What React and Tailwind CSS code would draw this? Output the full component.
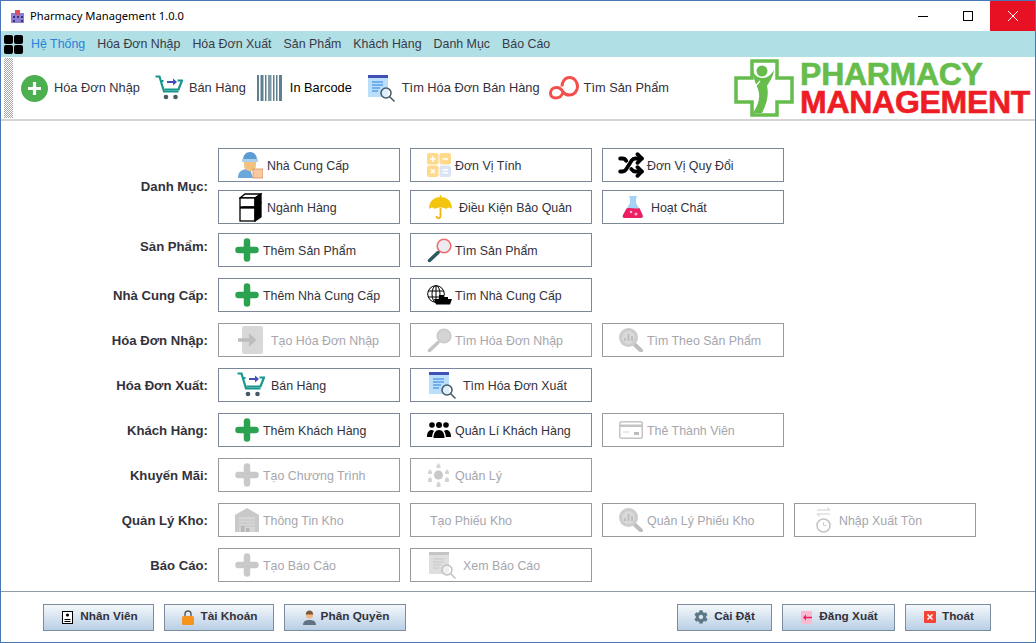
import React from 'react';
import { Shuffle } from 'lucide-react';
import { FaCog } from 'react-icons/fa';

const GREY = '#c9c9c9';

const Plus = ({ color = '#2ba24f' }) => (
  <svg width="24" height="24" viewBox="0 0 24 24" fill="none" stroke={color} strokeWidth="6.5" strokeLinecap="round">
    <path d="M12 3.5v17M3.5 12h17" />
  </svg>
);

const Supplier = () => (
  <svg width="25" height="28" viewBox="0 0 25 28">
    <path d="M0 27c0-6 3-8 8-9h4l3 9z" fill="#6aa7dc" />
    <path d="M6 11h12v3c0 4-3 6-6 6s-6-2-6-6z" fill="#f3c27e" />
    <path d="M5 9c0-5 3-8 7-8s7 3 7 8z" fill="#5d9bd4" />
    <rect x="4" y="8" width="16" height="3" fill="#a9d0ef" />
    <rect x="15" y="18" width="10" height="9" fill="#f8c9a0" stroke="#d98f5c" strokeWidth="0.8" />
  </svg>
);

const Calc = () => (
  <svg width="24" height="24" viewBox="0 0 24 24">
    <rect width="11.5" height="11.5" rx="2" fill="#ffd98c" />
    <rect x="12.5" width="11.5" height="11.5" rx="2" fill="#ffd98c" />
    <rect y="12.5" width="11.5" height="11.5" rx="2" fill="#ffd98c" />
    <rect x="12.5" y="12.5" width="11.5" height="11.5" rx="2" fill="#dbe4f2" />
    <path d="M3 6h5.5M5.750 3.200v5.500M15.500 6h5.500M3.800 16.300l4 4M7.800 16.300l-4 4M15.500 16.800h5.500M15.500 19.800h5.500" stroke="#fff" strokeWidth="1.600" />
  </svg>
);

const Boxes = () => (
  <svg width="23" height="29" viewBox="0 0 23 29" stroke="#000" strokeWidth="1.300">
    <path d="M1 5l5-4h16l-6 4z" fill="#fff" />
    <rect x="1" y="5" width="15" height="9" fill="#fff" />
    <path d="M16 5l6-4v9l-6 4z" fill="#000" />
    <path d="M1 15l4-1h11v1z" fill="#fff" />
    <rect x="1" y="15" width="15" height="13" fill="#fff" />
    <path d="M16 15l6-5v14l-6 4z" fill="#000" />
  </svg>
);

const Umbrella = () => (
  <svg width="23" height="24" viewBox="0 0 23 24">
    <path d="M0 14C0 6 5 2 11.500 2S23 6 23 14c-2-2-4-2-6 0-2-2-9-2-11 0-2-2-4-2-6 0z" fill="#f4c50e" />
    <path d="M11.500 0v2" stroke="#f4c50e" strokeWidth="1.500" />
    <path d="M11.500 13v8c0 3-4 3-4 0" fill="none" stroke="#f4b70e" strokeWidth="1.800" />
  </svg>
);

const Flask = () => (
  <svg width="22" height="22" viewBox="0 0 22 22">
    <path d="M7 0h8v1.500h-1V7l7 12c1 2 0 3-2 3H3c-2 0-3-1-2-3l7-12V1.500H7z" fill="#a6d3f5" />
    <path d="M4.500 12.500c4-1.500 9 1 13-.5l3 7c.8 2 0 3-2 3H3c-2 0-3-1-2-3z" fill="#ef1e63" />
    <circle cx="9" cy="16" r="1.300" fill="#ffb3cd" />
    <circle cx="14" cy="18" r="1.500" fill="#ffb3cd" />
  </svg>
);

const Magnifier = ({ ring = '#f26d6d', fill = '#ecebf0', handle = '#2f5a5e' }) => (
  <svg width="25" height="25" viewBox="0 0 25 25">
    <circle cx="17" cy="8" r="6.800" fill={fill} stroke={ring} strokeWidth="1.600" />
    <path d="M2.500 22.500l8.500-8" stroke={handle} strokeWidth="3.500" strokeLinecap="round" />
  </svg>
);

const GlobeShip = () => (
  <svg width="25" height="20" viewBox="0 0 25 20">
    <g fill="none" stroke="#000" strokeWidth="1">
      <circle cx="9" cy="9" r="8.300" />
      <ellipse cx="9" cy="9" rx="4" ry="8.300" />
      <path d="M9 1v16M1 6h16M1 12h16" />
    </g>
    <path d="M7 14h18l-2 5.500H9z" fill="#000" />
    <path d="M12 10h5v2h4v2H12z" fill="#000" />
  </svg>
);

const Enter = () => (
  <svg width="25" height="28" viewBox="0 0 25 28">
    <rect x="4" y="0" width="21" height="28" rx="2" fill="#d8d8d8" />
    <path d="M0 14h14" stroke="#bdbdbd" strokeWidth="3.500" />
    <path d="M11 7l7.500 7-7.500 7z" fill="#bdbdbd" />
  </svg>
);

const StatSearch = () => (
  <svg width="24" height="24" viewBox="0 0 24 24">
    <path d="M14 15l8 7.500" stroke="#bdbdbd" strokeWidth="4" strokeLinecap="round" />
    <circle cx="9.500" cy="9.500" r="9.500" fill="#cccccc" />
    <circle cx="9.500" cy="9.500" r="6.500" fill="#d9d9d9" />
    <path d="M6 13V10M9.500 13V6M13 13V8" stroke="#bcbcbc" strokeWidth="1.800" />
  </svg>
);

const Cart = () => (
  <svg width="28" height="26" viewBox="0 0 28 26" fill="none">
    <path d="M0.500 1.500h4l4.500 15h14.500" stroke="#16978d" strokeWidth="2.200" />
    <path d="M5.500 6h3M22.500 5.500h4.500l-3.500 9H9.500" stroke="#16978d" strokeWidth="2.200" />
    <path d="M12 7h8" stroke="#3f51b5" strokeWidth="2" />
    <path d="M18 3.500l4 3.500-4 3.500z" fill="#3f51b5" />
    <circle cx="11" cy="22" r="2.300" fill="#455a64" />
    <circle cx="20.500" cy="22" r="2.300" fill="#455a64" />
  </svg>
);

const DocSearch = ({ head = '#3f51b5', body = '#bbdefb', line = '#2f80e0', glass = '#455a64' }) => (
  <svg width="27" height="27" viewBox="0 0 27 27">
    <rect x="0" y="0" width="20" height="22" fill={body} />
    <rect x="0" y="0" width="20" height="3" fill={head} />
    <path d="M4 7h11M4 10h11M4 13h8M4 16h6" stroke={line} strokeWidth="1.200" />
    <circle cx="18" cy="18" r="5" fill="#fff" fillOpacity="0.500" stroke={glass} strokeWidth="1.500" />
    <path d="M21.500 21.500l5 5" stroke={glass} strokeWidth="1.500" />
  </svg>
);

const People = () => (
  <svg width="24" height="16" viewBox="0 0 24 16" fill="#000">
    <circle cx="5" cy="3" r="2.800" />
    <circle cx="12" cy="3" r="3" />
    <circle cx="19" cy="3" r="2.800" />
    <path d="M0 15c0-5 2-7 4.500-7 1 0 1.800.3 2.500 1-1.200 1.500-1.800 3.500-1.800 6z" />
    <path d="M6.500 16c0-5 2-8 5.500-8s5.500 3 5.500 8z" />
    <path d="M24 15c0-5-2-7-4.500-7-1 0-1.800.3-2.500 1 1.200 1.500 1.800 3.500 1.800 6z" />
  </svg>
);

const Card = () => (
  <svg width="24" height="18" viewBox="0 0 24 18">
    <rect x="0.750" y="0.750" width="22.500" height="16.500" rx="2" fill="#fff" stroke="#c4c4c4" strokeWidth="1.500" />
    <rect x="1" y="3.500" width="22" height="2.500" fill="#c4c4c4" />
    <path d="M4 11h6" stroke="#d4d4d4" strokeWidth="1" />
    <rect x="15" y="11" width="5" height="3" fill="#bdbdbd" />
  </svg>
);

const Hub = () => (
  <svg width="21" height="24" viewBox="0 0 21 24" fill="#d4d4d4">
    <circle cx="10.500" cy="12" r="4.500" fill="#c8c8c8" />
    <path d="M8.500 3l2-3 2 3v2h-4zM8.500 21l2-3 2 3v3h-4zM0 9l2-3 2 3v2H0zM17 9l2-3 2 3v2h-4zM0 16l2-2 2 2v3H0zM17 16l2-2 2 2v3h-4z" />
  </svg>
);

const Warehouse = () => (
  <svg width="24" height="24" viewBox="0 0 24 24">
    <path d="M0 7l12-7 12 7v17H0z" fill="#c9c9c9" />
    <rect x="4" y="9" width="16" height="15" fill="#d6d6d6" />
    <path d="M4 12h16M4 15h16M4 18h16" stroke="#c2c2c2" strokeWidth="0.800" />
    <rect x="6" y="18" width="3.500" height="6" fill="#b8b8b8" />
    <rect x="11" y="20" width="3.500" height="4" fill="#b8b8b8" />
  </svg>
);

const Timer = () => (
  <svg width="15" height="26" viewBox="0 0 15 26" fill="none" stroke="#cfcfcf" strokeWidth="1">
    <path d="M1 3h13M11 0.500L14 3M1 7h13M4 9.500L1 7" />
    <circle cx="7.500" cy="18.500" r="6.500" stroke="#c4c4c4" strokeWidth="1.500" />
    <path d="M7.500 15v3.500h3" />
  </svg>
);

const Loop = () => (
  <svg width="30" height="24" viewBox="0 0 30 24" fill="none" stroke="#f2504b" strokeWidth="3">
    <path d="M14 16c-1 4-4 6-7.500 6C3.500 22 1.500 20 1.500 17c0-3 2.500-5.500 6-5.500 3 0 5 1.500 6.500 4.500 1.500 2 3.500 3 6.500 3 4.500 0 8-3.500 8-8.500 0-5-3.500-9-8-9-4.500 0-7.500 4-7.500 9" />
  </svg>
);

const Barcode = () => (
  <svg width="25" height="26" viewBox="0 0 25 26" fill="#5f7f90">
    <rect x="0" width="2" height="26" />
    <rect x="3.500" width="3" height="26" />
    <rect x="8" width="1.500" height="26" />
    <rect x="11" width="3.500" height="26" fill="#7e98a5" />
    <rect x="16" width="1.500" height="26" />
    <rect x="19" width="1.500" height="26" />
    <rect x="22" width="3" height="26" />
  </svg>
);

const CirclePlus = () => (
  <svg width="27" height="27" viewBox="0 0 27 27">
    <circle cx="13.500" cy="13.500" r="13.500" fill="#4caf50" />
    <path d="M13.500 7v13M7 13.500h13" stroke="#fff" strokeWidth="3.200" />
  </svg>
);

const Logo = () => (
  <div className="flex items-center">
    <svg width="60" height="58" viewBox="0 0 60 58">
      <path d="M18 2h25v17h15v24H43v13H18V43H2V19h16z" fill="#fff" stroke="#66bd4c" strokeWidth="3.500" />
      <circle cx="28" cy="12" r="5.500" fill="#66bd4c" />
      <path d="M18 9c2 8 6 10 11 10 4 0 8-3 11-8-1 8-5 12-7 16 2 8 0 18-5 27h-9c5-8 8-15 5-24-3-6-5-13-6-21z" fill="#66bd4c" />
      <path d="M19 31c2-3 4-6 7-9" stroke="#fff" strokeWidth="1.200" fill="none" />
    </svg>
    <div className="ml-[6px] font-bold font-['Liberation_Sans',sans-serif] text-[32px] leading-[28px] tracking-[-0.3px] [-webkit-text-stroke:0.6px_currentColor]">
      <div className="text-[#66bd4c]">PHARMACY</div>
      <div className="text-[#ee1c25]">MANAGEMENT</div>
    </div>
  </div>
);

const FormButton = ({ cell = 'w-[45px] pl-[17px]', icon, text, disabled }) => (
  <button className={`w-[182px] h-[34px] shrink-0 flex items-center bg-white border ${disabled ? 'border-[#9a9a9a] text-[#a6a6ae]' : 'border-[#7b8898] text-[#33323c]'}`}>
    <span className={`${cell} -ml-px shrink-0 flex items-center`}>{icon}</span>
    <span className="whitespace-nowrap pt-[2px]">{text}</span>
  </button>
);

const Label = ({ children, extra = '' }) => (
  <div className={`w-[207px] text-right font-bold text-[#33323c] text-[13.150px] pt-[2px] self-center ${extra}`}>{children}</div>
);

const Group = ({ label, extra, mt, children }) => (
  <div className={`flex gap-[10px] ${mt}`}>
    <Label extra={extra}>{label}</Label>
    <div className="flex flex-col gap-[8px]">{children}</div>
  </div>
);

const FooterButton = ({ width, gap = 'gap-[6px]', pad = 'pl-[2px]', icon, text }) => (
  <button className={`${width} ${gap} ${pad} h-[27px] flex items-center justify-center border border-[#7b8c9f] bg-gradient-to-b from-[#f4f8fb] to-[#b9cfe5] font-bold text-[#33323c] text-[11.800px]`}>
    {icon}
    <span>{text}</span>
  </button>
);

const menus = ['Hóa Đơn Nhập', 'Hóa Đơn Xuất', 'Sản Phẩm', 'Khách Hàng', 'Danh Mục', 'Báo Cáo'];

export default function App() {
  return (
    <div className="w-[1036px] h-[643px] flex flex-col bg-white border border-[#4a76b5] overflow-hidden font-['Liberation_Sans',sans-serif] text-[12.400px]">
      {/* thanh tieu de */}
      <div className="h-[30px] flex items-center shrink-0">
        <svg className="ml-[10px]" width="13" height="13" viewBox="0 0 13 13">
          <rect x="0" y="3" width="13" height="10" fill="#8f7fd0" />
          <rect x="4" y="0" width="5" height="5" fill="#e0505a" />
          <path d="M2 6h2v2H2zM6 6h2v2H6zM10 6h2v2h-2zM2 10h2v2H2zM10 10h2v2h-2z" fill="#3c2f80" />
        </svg>
        <span className="ml-[6px] text-[11.200px] text-black font-['Noto_Sans',sans-serif]">Pharmacy Management 1.0.0</span>
        <div className="ml-auto flex items-center h-full">
          <span className="w-[45px] flex justify-center"><span className="w-[10px] h-px bg-black" /></span>
          <span className="w-[45px] flex justify-center"><span className="w-[10px] h-[10px] border border-black" /></span>
          <span className="w-[45px] h-full flex items-center justify-center bg-[#e81123]">
            <svg width="10" height="10" viewBox="0 0 10 10" stroke="#fff" strokeWidth="1"><path d="M0 0l10 10M10 0L0 10" /></svg>
          </span>
        </div>
      </div>

      {/* menu */}
      <div className="h-[26px] shrink-0 flex items-center bg-[#b0dfe5] text-[#3a3a46]">
        <div className="ml-[3px] grid grid-cols-2 gap-[1px]">
          <span className="w-[9px] h-[9px] rounded-[2px] bg-black" />
          <span className="w-[9px] h-[9px] rounded-[2px] bg-black" />
          <span className="w-[9px] h-[9px] rounded-[2px] bg-black" />
          <span className="w-[9px] h-[9px] rounded-[2px] bg-black" />
        </div>
        <span className="ml-[8px] text-[#2a82da]">Hệ Thống</span>
        {menus.map(m => <span key={m} className="ml-[12px]">{m}</span>)}
      </div>

      {/* toolbar */}
      <div className="h-[64px] shrink-0 flex items-center border-b-2 border-[#d4d4d4] text-[#33323c] text-[12.800px]">
        <div className="ml-[3px] w-[9px] h-[60px] bg-[repeating-conic-gradient(#a8a8a8_0_25%,#ffffff_0_50%)] bg-[length:2px_2px]" />
        <div className="ml-[8px] flex items-center gap-[6px]"><CirclePlus /><span>Hóa Đơn Nhập</span></div>
        <div className="ml-[15px] flex items-center gap-[6px]"><Cart /><span>Bán Hàng</span></div>
        <div className="ml-[11px] flex items-center gap-[8px]"><Barcode /><span className="text-black">In Barcode</span></div>
        <div className="ml-[16px] flex items-center gap-[7px]"><DocSearch /><span>Tìm Hóa Đơn Bán Hàng</span></div>
        <div className="ml-[9px] flex items-center gap-[5px]"><Loop /><span>Tìm Sản Phẩm</span></div>
        <div className="ml-auto mr-[5px]"><Logo /></div>
      </div>

      {/* cac nhom chuc nang */}
      <div className="flex-1 pt-[27px]">
        <Group label="Danh Mục:">
          <div className="flex gap-[10px]">
            <FormButton cell="w-[49px] pl-[20px]" icon={<Supplier />} text="Nhà Cung Cấp" />
            <FormButton icon={<Calc />} text="Đơn Vị Tính" />
            <FormButton cell="w-[45px] pl-[16px]" icon={<Shuffle size={26} strokeWidth={3.500} color="#000" />} text="Đơn Vị Quy Đổi" />
          </div>
          <div className="flex gap-[10px]">
            <FormButton cell="w-[49px] pl-[21px]" icon={<Boxes />} text="Ngành Hàng" />
            <FormButton cell="w-[49px] pl-[19px]" icon={<Umbrella />} text="Điều Kiện Bảo Quản" />
            <FormButton cell="w-[49px] pl-[20px]" icon={<Flask />} text="Hoạt Chất" />
          </div>
        </Group>
        <Group label="Sản Phẩm:" extra="pb-[8px]" mt="mt-[9px]">
          <div className="flex gap-[10px]">
            <FormButton icon={<Plus />} text="Thêm Sản Phẩm" />
            <FormButton icon={<Magnifier />} text="Tìm Sản Phẩm" />
          </div>
        </Group>
        <Group label="Nhà Cung Cấp:" mt="mt-[11px]">
          <div className="flex gap-[10px]">
            <FormButton icon={<Plus />} text="Thêm Nhà Cung Cấp" />
            <FormButton icon={<GlobeShip />} text="Tìm Nhà Cung Cấp" />
          </div>
        </Group>
        <Group label="Hóa Đơn Nhập:" mt="mt-[11px]">
          <div className="flex gap-[10px]">
            <FormButton disabled cell="w-[53px] pl-[20px]" icon={<Enter />} text="Tạo Hóa Đơn Nhập" />
            <FormButton disabled icon={<Magnifier ring="#c9c9c9" fill="#d4d4d4" handle="#c4c4c4" />} text="Tìm Hóa Đơn Nhập" />
            <FormButton disabled icon={<StatSearch />} text="Tìm Theo Sản Phẩm" />
          </div>
        </Group>
        <Group label="Hóa Đơn Xuất:" mt="mt-[11px]">
          <div className="flex gap-[10px]">
            <FormButton cell="w-[53px] pl-[19px]" icon={<Cart />} text="Bán Hàng" />
            <FormButton cell="w-[53px] pl-[19px]" icon={<DocSearch />} text="Tìm Hóa Đơn Xuất" />
          </div>
        </Group>
        <Group label="Khách Hàng:" mt="mt-[11px]">
          <div className="flex gap-[10px]">
            <FormButton icon={<Plus />} text="Thêm Khách Hàng" />
            <FormButton icon={<People />} text="Quản Lí Khách Hàng" />
            <FormButton disabled icon={<Card />} text="Thẻ Thành Viên" />
          </div>
        </Group>
        <Group label="Khuyến Mãi:" mt="mt-[11px]">
          <div className="flex gap-[10px]">
            <FormButton disabled icon={<Plus color={GREY} />} text="Tạo Chương Trình" />
            <FormButton disabled cell="w-[45px] pl-[18px]" icon={<Hub />} text="Quản Lý" />
          </div>
        </Group>
        <Group label="Quản Lý Kho:" mt="mt-[11px]">
          <div className="flex gap-[10px]">
            <FormButton disabled icon={<Warehouse />} text="Thông Tin Kho" />
            <FormButton disabled cell="w-[20px]" text="Tạo Phiếu Kho" />
            <FormButton disabled icon={<StatSearch />} text="Quản Lý Phiếu Kho" />
            <FormButton disabled cell="w-[45px] pl-[22px]" icon={<Timer />} text="Nhập Xuất Tồn" />
          </div>
        </Group>
        <Group label="Báo Cáo:" mt="mt-[11px]">
          <div className="flex gap-[10px]">
            <FormButton disabled icon={<Plus color={GREY} />} text="Tạo Báo Cáo" />
            <FormButton disabled cell="w-[53px] pl-[19px]" icon={<DocSearch head="#c4c4c4" body="#dedede" line="#c8c8c8" glass="#c0c0c0" />} text="Xem Báo Cáo" />
          </div>
        </Group>
      </div>

      {/* chan trang */}
      <div className="h-[51px] shrink-0 flex items-center border-t border-[#919ba6] pl-[42px] pr-[44px]">
        <div className="flex gap-[10px]">
          <FooterButton width="w-[111px]" gap="gap-[7px]" pad="pl-[3px]" text="Nhân Viên" icon={
            <svg width="11" height="13" viewBox="0 0 11 13"><rect x="0.500" y="0.500" width="10" height="12" fill="#fff" stroke="#000" /><circle cx="5.500" cy="4" r="1.600" /><path d="M2.500 8h6v1h-6zM2.500 10h6v1h-6z" /></svg>
          } />
          <FooterButton width="w-[110px]" text="Tài Khoản" icon={
            <svg width="12" height="15" viewBox="0 0 12 15"><path d="M3 7V4a3 3 0 016 0v3" fill="none" stroke="#5a5a5a" strokeWidth="1.400" /><rect y="6" width="12" height="9" rx="1.500" fill="#f7941d" /></svg>
          } />
          <FooterButton width="w-[122px]" gap="gap-[5px]" text="Phân Quyền" icon={
            <svg width="13" height="15" viewBox="0 0 13 15"><path d="M0 15c0-4 3-5 6.500-5s6.500 1 6.500 5z" fill="#5f7383" /><circle cx="6.500" cy="5" r="3.600" fill="#f1b887" /><path d="M2.800 4.500C2.800 2 4.500.5 6.500.5s3.700 1.500 3.700 4c-2 0-5 0-7.400 0z" fill="#7b5a40" /></svg>
          } />
        </div>
        <div className="ml-auto flex gap-[10px]">
          <FooterButton width="w-[95px]" pad="pl-0" text="Cài Đặt" icon={<FaCog size={14} color="#5f7888" />} />
          <FooterButton width="w-[113px]" gap="gap-[7px]" text="Đăng Xuất" icon={
            <svg width="11" height="13" viewBox="0 0 11 13"><rect width="11" height="13" rx="1" fill="#f8bbd0" /><path d="M5 6.500h6" stroke="#e91e63" strokeWidth="1.500" /><path d="M5 3.500v6l-3-3z" fill="#e91e63" /></svg>
          } />
          <FooterButton width="w-[86px]" text="Thoát" icon={
            <svg width="12" height="12" viewBox="0 0 12 12"><rect width="12" height="12" rx="1" fill="#f44336" /><path d="M3.500 3.500l5 5M8.500 3.500l-5 5" stroke="#fff" strokeWidth="1.500" /></svg>
          } />
        </div>
      </div>
    </div>
  );
}
